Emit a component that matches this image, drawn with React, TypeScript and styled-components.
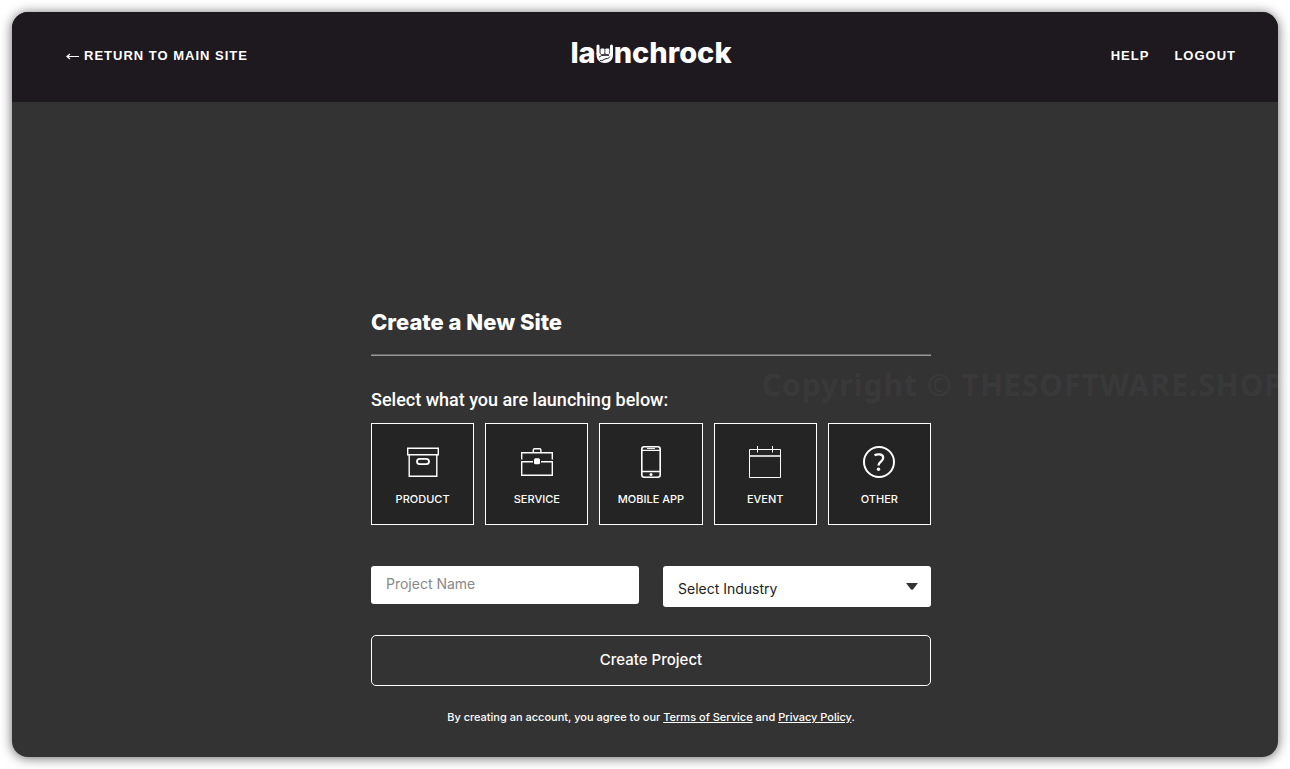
import React, { useState } from "react";
import styled, { createGlobalStyle } from "styled-components";

const GlobalStyle = createGlobalStyle`
  *, *::before, *::after {
    box-sizing: border-box;
  }

  body {
    margin: 0;
    background: #fff;
    color: #fff;
    font-family: Inter, "Liberation Sans", sans-serif;
  }

  button, input, select {
    font: inherit;
  }
`;

const Page = styled.div`
  display: flex;
  min-height: 100vh;
  padding: 12px;
  overflow: hidden;
`;

const Card = styled.div`
  position: relative;
  flex: 1;
  display: flex;
  flex-direction: column;
  border-radius: 16px;
  background: #333;
  box-shadow: 0 1px 12px rgba(0, 0, 0, 0.6);
`;

const Header = styled.header`
  display: grid;
  grid-template-columns: 1fr auto 1fr;
  align-items: center;
  height: 90px;
  padding: 0 42px 4px 54px;
  border-radius: 16px 16px 0 0;
  background: #1e181f;
`;

const HeaderNav = styled.nav<{ $end?: boolean }>`
  display: flex;
  justify-content: ${(p) => (p.$end ? "flex-end" : "flex-start")};
  gap: 25px;
`;

const HeaderLink = styled.a`
  display: flex;
  align-items: center;
  gap: 5px;
  padding-top: 1px;
  color: #fff;
  font-family: "Liberation Sans", Arial, sans-serif;
  font-size: 13px;
  font-weight: 700;
  line-height: 20px;
  letter-spacing: 1px;
  text-decoration: none;
  text-transform: uppercase;
`;

const Logo = styled.a`
  display: flex;
  align-items: flex-end;
  padding-bottom: 5px;
  color: #fff;
  font-size: 29px;
  font-weight: 800;
  line-height: 32px;
  text-decoration: none;

  svg {
    margin-bottom: 6px;
  }
`;

const Main = styled.main`
  flex: 1;
  padding: 204px 0 28px 12px;
`;

const Form = styled.form`
  width: 100%;
  max-width: 560px;
  margin: 0 auto;
`;

const Title = styled.h1`
  margin: 0;
  font-size: 22px;
  font-weight: 800;
  line-height: 32px;
`;

const Rule = styled.hr`
  margin: 16px 0 32px;
  border: 0;
  border-top: 1px solid #666;
  border-bottom: 1px solid #999;
`;

const Kinds = styled.fieldset`
  margin: 0;
  padding: 0;
  border: 0;
`;

const KindsLegend = styled.legend`
  padding: 0;
  font-family: Roboto, Inter, sans-serif;
  font-size: 18px;
  font-weight: 500;
  line-height: 24px;
`;

const KindGrid = styled.div`
  display: grid;
  grid-template-columns: repeat(5, 1fr);
  gap: 11px;
  padding-top: 11px;
`;

const KindButton = styled.button<{ $selected: boolean }>`
  display: flex;
  flex-direction: column;
  align-items: center;
  gap: 13px;
  height: 102px;
  padding: 22px 0 0;
  border: 1px solid #fff;
  background: ${(p) => (p.$selected ? "#444" : "#242424")};
  color: #fff;
  font-size: 11px;
  font-weight: 500;
  line-height: 16px;
  text-transform: uppercase;
  cursor: pointer;
`;

const Fields = styled.div`
  display: grid;
  grid-template-columns: 1fr 1fr;
  align-items: start;
  gap: 24px;
  margin: 41px 0 28px;
`;

const ProjectInput = styled.input`
  width: 100%;
  height: 38px;
  padding: 0 15px 3px;
  border: 0;
  border-radius: 3px;
  background: #fff;
  color: #222;
  font-size: 14px;

  &::placeholder {
    color: #888;
    opacity: 1;
  }
`;

const SelectWrap = styled.div`
  position: relative;

  svg {
    position: absolute;
    top: 17px;
    right: 13px;
    pointer-events: none;
  }
`;

const IndustrySelect = styled.select`
  display: block;
  width: 100%;
  height: 41px;
  padding: 4px 32px 0 15px;
  border: 0;
  border-radius: 3px;
  background: #fff;
  color: #222;
  font-size: 14px;
  appearance: none;
`;

const SubmitButton = styled.button`
  display: block;
  width: 100%;
  height: 51px;
  padding: 0 0 2px;
  border: 1px solid #fff;
  border-radius: 5px;
  background: transparent;
  color: #fff;
  font-size: 15px;
  font-weight: 500;
  cursor: pointer;
`;

const Terms = styled.p`
  margin: 23px 0 0;
  font-size: 11px;
  font-weight: 500;
  line-height: 16px;
  text-align: center;

  a {
    color: inherit;
  }
`;

const Watermark = styled.div`
  position: absolute;
  top: 352px;
  right: -6px;
  color: rgba(255, 255, 255, 0.05);
  font-family: "Noto Sans", "Open Sans", sans-serif;
  font-size: 30px;
  font-weight: 700;
  line-height: 42px;
  letter-spacing: 1px;
  white-space: nowrap;
  pointer-events: none;
`;

const LineIcon = ({ children }: { children: React.ReactNode }) => (
  <svg width="32" height="32" viewBox="0 0 32 32" fill="none" stroke="#fff" strokeWidth="1.4" aria-hidden="true">
    {children}
  </svg>
);

const kinds = [
  {
    name: "Product",
    icon: (
      <LineIcon>
        <path d="M.7 2.2h30.6v6.6H.7zM2.2 8.8v21.4h27.6V8.8" />
        <rect x="10" y="12.8" width="12" height="5.4" rx="2.7" strokeWidth="1.8" />
      </LineIcon>
    ),
  },
  {
    name: "Service",
    icon: (
      <LineIcon>
        <path d="M12.3 6V4q0-1.3 1.3-1.3h5q1.3 0 1.3 1.3v2M.7 13.5V6.7h30.6v6.8M12 15.7H.7v13.6h30.6V15.7H20" />
        <rect x="13" y="12.3" width="6" height="6" rx="1.5" fill="#fff" stroke="none" />
      </LineIcon>
    ),
  },
  {
    name: "Mobile App",
    icon: (
      <LineIcon>
        <rect x="6.8" y=".8" width="18.4" height="30.4" rx="2.4" strokeWidth="1.6" />
        <path d="M7 4.4h18M7 25.5h18" />
        <path d="M12 2.4h8" strokeWidth="1" />
        <circle cx="16" cy="28.4" r="1.5" fill="#fff" stroke="none" />
      </LineIcon>
    ),
  },
  {
    name: "Event",
    icon: (
      <LineIcon>
        <path d="M.5 3.5h31v28H.5zM8.5 0v6.5M23.5 0v6.5" strokeWidth="1" />
        <path d="M1 10h30" stroke="#ccc" strokeWidth="2" />
      </LineIcon>
    ),
  },
  {
    name: "Other",
    icon: (
      <LineIcon>
        <circle cx="16" cy="16" r="15" strokeWidth="2" />
        <path
          d="M11.5 9.3c3-1.6 8.7-1.4 8.7 2.5 0 3.8-4.7 3.7-4.7 7.7"
          strokeWidth="2.3"
        />
        <circle cx="15.5" cy="23.2" r="1.7" fill="#fff" stroke="none" />
      </LineIcon>
    ),
  },
];

const ArrowLeft = () => (
  <svg width="13" height="9" viewBox="0 0 13 9" fill="none" stroke="#fff" strokeWidth="1.2" aria-hidden="true">
    <path d="M13 5.5H1M4 3L1 5.5 4 8" />
  </svg>
);

const RockHand = () => (
  <svg width="18" height="20" viewBox="0 0 18 20" aria-hidden="true">
    <g fill="#fff">
      <path d="M.5 3a1.5 1.5 0 0 1 3 0v8h-3z" />
      <path d="M14 3a1.5 1.5 0 0 1 3 0v8h-3z" />
      <rect x="4.5" y="5.5" width="4" height="5.5" rx="1" />
      <rect x="9.3" y="5.5" width="4" height="5.5" rx="1" />
      <path d="M.5 10h3l1.5 1.8h7.5L14 10h3v2c0 4.800-3.500 8-8.200 8S.5 16.800.5 12z" />
    </g>
    <path
      d="M3 14.2q2.500-2.300 5-1.900h5M4 17.500c2.500.8 3.500-1.300 6-1.800 2 0 3-.7 4-2.200"
      fill="none"
      stroke="#1e181f"
      strokeWidth="1"
    />
  </svg>
);

const Caret = () => (
  <svg width="12" height="7" viewBox="0 0 12 7" aria-hidden="true">
    <path d="M0 0h12L7.200 6.200q-1.200 1.200-2.400 0z" fill="#333" />
  </svg>
);

export default function App() {
  const [kind, setKind] = useState<string | null>(null);

  return (
    <Page>
      <GlobalStyle />
      <Card>
        <Header>
          <HeaderNav>
            <HeaderLink href="#main-site">
              <ArrowLeft />
              Return to main site
            </HeaderLink>
          </HeaderNav>
          <Logo href="#home" aria-label="launchrock">
            la
            <RockHand />
            nchrock
          </Logo>
          <HeaderNav $end>
            <HeaderLink href="#help">Help</HeaderLink>
            <HeaderLink href="#logout">Logout</HeaderLink>
          </HeaderNav>
        </Header>
        <Main>
          <Form onSubmit={(e) => e.preventDefault()}>
            <Title>Create a New Site</Title>
            <Rule />
            <Kinds>
              <KindsLegend>Select what you are launching below:</KindsLegend>
              <KindGrid>
                {kinds.map(({ name, icon }) => (
                  <KindButton
                    key={name}
                    type="button"
                    $selected={kind === name}
                    aria-pressed={kind === name}
                    onClick={() => setKind(name)}
                  >
                    {icon}
                    {name}
                  </KindButton>
                ))}
              </KindGrid>
            </Kinds>
            <Fields>
              <ProjectInput type="text" placeholder="Project Name" aria-label="Project Name" />
              <SelectWrap>
                <IndustrySelect aria-label="Industry" defaultValue="">
                  <option value="">Select Industry</option>
                </IndustrySelect>
                <Caret />
              </SelectWrap>
            </Fields>
            <SubmitButton type="submit">Create Project</SubmitButton>
            <Terms>
              By creating an account, you agree to our <a href="#terms">Terms of Service</a> and{" "}
              <a href="#privacy">Privacy Policy</a>.
            </Terms>
          </Form>
        </Main>
        <Watermark>Copyright © THESOFTWARE.SHOP</Watermark>
      </Card>
    </Page>
  );
}
